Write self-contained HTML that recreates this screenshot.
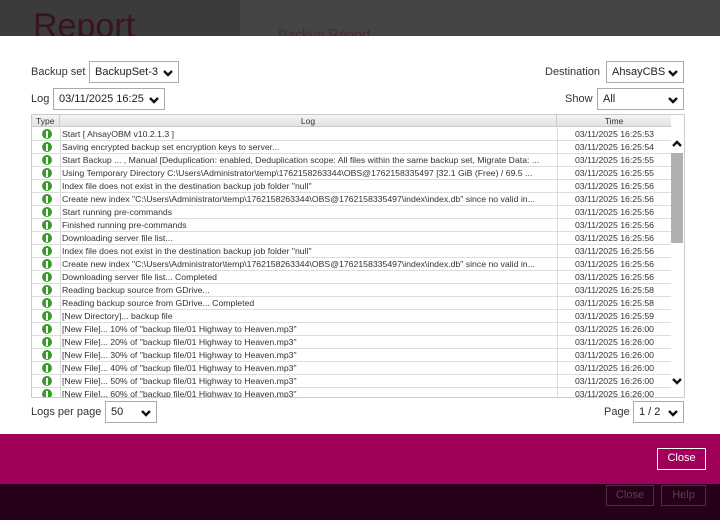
<!DOCTYPE html>
<html><head><style>
*{margin:0;padding:0;box-sizing:border-box}
body{width:720px;height:520px;overflow:hidden;position:relative;font-family:"Liberation Sans","DejaVu Sans",sans-serif;background:#444}
.abs{position:absolute}
.sel{position:absolute;border:1px solid #aaa;background:#fff;font-size:11px;color:#222;padding-left:5px;line-height:20px;height:22px}
.sel svg{position:absolute;right:5px;top:7px}
.lbl{position:absolute;font-size:11px;color:#333;line-height:14px}
.row{position:absolute;left:0;height:13px;width:639px;border-bottom:1px solid #ddd;font-size:8.7px;color:#333;line-height:12px;white-space:nowrap}
.row .ic{position:absolute;left:10px;top:1px;width:10px;height:10px;border-radius:50%;background:#3a9a2a}
.row .ic:after{content:"";position:absolute;left:4px;top:4px;width:2px;height:5px;background:#fff}
.row .ic:before{content:"";position:absolute;left:4px;top:1.5px;width:2px;height:2px;background:#fff}
.row .l{position:absolute;left:30px;width:492px;overflow:hidden}
.row .t{position:absolute;left:525px;width:114px;text-align:center;border-left:1px solid #ddd;height:13px}
.row .c1{position:absolute;left:28px;top:0;height:13px;border-left:1px solid #ddd}
</style></head><body>
<div class="abs" style="left:0;top:0;width:240px;height:36px;background:#3b3b3b"></div>
<div class="abs" style="left:240px;top:0;width:480px;height:36px;background:#454545"></div>
<div class="abs" style="left:33px;top:6px;font-size:34px;color:#3a1222;line-height:40px">Report</div>
<div class="abs" style="left:278px;top:26px;font-size:14px;color:#4a2a35;line-height:16px">Backup Report</div>
<div class="abs" style="left:0;top:36px;width:720px;height:398px;background:#fff"></div>

<div class="lbl" style="left:31px;top:65px">Backup set</div>
<div class="sel" style="left:89px;top:61px;width:90px">BackupSet-3<svg width="10" height="8" viewBox="0 0 10 8"><path d="M1 2l4 4 4-4" stroke="#111" stroke-width="2.4" fill="none"/></svg></div>
<div class="lbl" style="left:31px;top:92px">Log</div>
<div class="sel" style="left:53px;top:88px;width:112px">03/11/2025 16:25<svg width="10" height="8" viewBox="0 0 10 8"><path d="M1 2l4 4 4-4" stroke="#111" stroke-width="2.4" fill="none"/></svg></div>
<div class="lbl" style="left:545px;top:65px">Destination</div>
<div class="sel" style="left:606px;top:61px;width:78px">AhsayCBS<svg width="10" height="8" viewBox="0 0 10 8"><path d="M1 2l4 4 4-4" stroke="#111" stroke-width="2.4" fill="none"/></svg></div>
<div class="lbl" style="left:565px;top:92px">Show</div>
<div class="sel" style="left:597px;top:88px;width:87px">All<svg width="10" height="8" viewBox="0 0 10 8"><path d="M1 2l4 4 4-4" stroke="#111" stroke-width="2.4" fill="none"/></svg></div>

<div class="abs" style="left:31px;top:114px;width:654px;height:284px;border:1px solid #ccc;overflow:hidden;background:#fff">
 <div class="abs" style="left:0;top:0;width:639px;height:12px;background:linear-gradient(#f4f4f4,#e2e2e2);border-bottom:1px solid #ccc;font-size:8.5px;color:#333;line-height:12px">
  <span class="abs" style="left:4px">Type</span><span class="abs" style="left:27px;top:0;height:12px;border-left:1px solid #ccc"></span>
  <span class="abs" style="left:27px;width:498px;text-align:center">Log</span><span class="abs" style="left:524px;top:0;height:12px;border-left:1px solid #ccc"></span>
  <span class="abs" style="left:525px;width:114px;text-align:center">Time</span></div>
 <div id="rows"></div>
 <div class="abs" style="left:639px;top:38px;width:12px;height:90px;background:#b0b0b0"></div>
 <svg class="abs" style="left:640px;top:25px" width="10" height="8" viewBox="0 0 10 8"><path d="M1 6l4-4 4 4" stroke="#111" stroke-width="2.4" fill="none"/></svg>
 <svg class="abs" style="left:640px;top:262px" width="10" height="8" viewBox="0 0 10 8"><path d="M1 2l4 4 4-4" stroke="#111" stroke-width="2.4" fill="none"/></svg>
</div>

<div class="lbl" style="left:31px;top:405px">Logs per page</div>
<div class="sel" style="left:105px;top:401px;width:52px">50<svg width="10" height="8" viewBox="0 0 10 8"><path d="M1 2l4 4 4-4" stroke="#111" stroke-width="2.4" fill="none"/></svg></div>
<div class="lbl" style="left:604px;top:405px">Page</div>
<div class="sel" style="left:633px;top:401px;width:51px">1 / 2<svg width="10" height="8" viewBox="0 0 10 8"><path d="M1 2l4 4 4-4" stroke="#111" stroke-width="2.4" fill="none"/></svg></div>

<div class="abs" style="left:0;top:434px;width:720px;height:50px;background:#a0005a"></div>
<div class="abs" style="left:657px;top:448px;width:49px;height:22px;border:1.5px solid #fff;color:#fff;font-size:11px;line-height:19px;text-align:center">Close</div>
<div class="abs" style="left:0;top:484px;width:720px;height:36px;background:#26001a"></div>
<div class="abs" style="left:606px;top:485px;width:48px;height:21px;border:1px solid #4a3040;color:#5a4050;font-size:11px;line-height:19px;text-align:center">Close</div>
<div class="abs" style="left:661px;top:485px;width:45px;height:21px;border:1px solid #4a3040;color:#5a4050;font-size:11px;line-height:19px;text-align:center">Help</div>

<script>
var L=[["Start [ AhsayOBM v10.2.1.3 ]","16:25:53"],["Saving encrypted backup set encryption keys to server...","16:25:54"],["Start Backup ... , Manual [Deduplication: enabled, Deduplication scope: All files within the same backup set, Migrate Data: ...","16:25:55"],["Using Temporary Directory C:\\Users\\Administrator\\temp\\1762158263344\\OBS@1762158335497 [32.1 GiB (Free) / 69.5 ...","16:25:55"],["Index file does not exist in the destination backup job folder \"null\"","16:25:56"],["Create new index \"C:\\Users\\Administrator\\temp\\1762158263344\\OBS@1762158335497\\index\\index.db\" since no valid in...","16:25:56"],["Start running pre-commands","16:25:56"],["Finished running pre-commands","16:25:56"],["Downloading server file list...","16:25:56"],["Index file does not exist in the destination backup job folder \"null\"","16:25:56"],["Create new index \"C:\\Users\\Administrator\\temp\\1762158263344\\OBS@1762158335497\\index\\index.db\" since no valid in...","16:25:56"],["Downloading server file list... Completed","16:25:56"],["Reading backup source from GDrive...","16:25:58"],["Reading backup source from GDrive... Completed","16:25:58"],["[New Directory]... backup file","16:25:59"]];
for(var p=10;p<=60;p+=10)L.push(["[New File]... "+p+"% of \"backup file/01 Highway to Heaven.mp3\"","16:26:00"]);
var h="";L.forEach(function(r,i){h+='<div class="row" style="top:'+(13+i*13)+'px"><span class="ic"></span><span class="c1"></span><span class="l"></span><span class="t">03/11/2025 '+r[1]+'</span></div>';});
document.getElementById("rows").innerHTML=h;
var ls=document.querySelectorAll(".row .l");L.forEach(function(r,i){ls[i].textContent=r[0];});
</script>
</body></html>
